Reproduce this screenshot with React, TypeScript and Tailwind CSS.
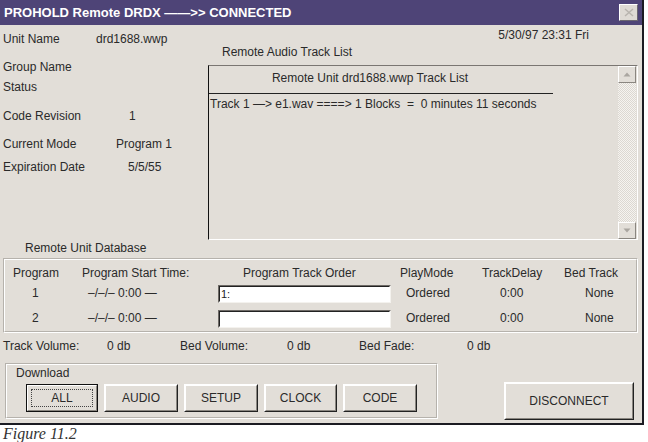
import React from 'react';

// raised 3d button in the old dialog style
function Btn({ label, w, h = 28, isDefault = false }: { label: string; w: number; h?: number; isDefault?: boolean }) {
  return (
    <div
      className={`flex items-center justify-center bg-[#e2ded8] text-[12px] text-[#2a2a2a] border ${
        isDefault ? 'border-[#111]' : 'border-t-white border-l-white border-r-[#222] border-b-[#222]'
      }`}
      style={{ width: w, height: h }}
    >
      <div className="w-full h-full flex items-center justify-center border border-t-white border-l-white border-r-[#8a8680] border-b-[#8a8680]">
        {isDefault ? (
          <div className="w-[calc(100%-6px)] h-[calc(100%-6px)] flex items-center justify-center border border-dotted border-[#444]">
            {label}
          </div>
        ) : (
          label
        )}
      </div>
    </div>
  );
}

// sunken edit box
function Field({ value }: { value: string }) {
  return (
    <div className="w-[173px] h-[18px] bg-white border border-t-[#6e6a66] border-l-[#6e6a66] border-r-[#f4f2ee] border-b-[#f4f2ee]">
      <div className="h-full border border-t-[#222] border-l-[#222] border-r-transparent border-b-transparent px-[1px] text-[11px] leading-[14px] text-[#222]">
        {value}
      </div>
    </div>
  );
}

const info = [
  { label: 'Unit Name', value: 'drd1688.wwp', valueX: 93, h: 28 },
  { label: 'Group Name', value: '', valueX: 0, h: 20 },
  { label: 'Status', value: '', valueX: 0, h: 29 },
  { label: 'Code Revision', value: '1', valueX: 126, h: 28 },
  { label: 'Current Mode', value: 'Program 1', valueX: 113, h: 23 },
  { label: 'Expiration Date', value: '5/5/55', valueX: 125, h: 20 },
];

const programs = [
  { n: '1', order: '1:' },
  { n: '2', order: '' },
];

export default function App() {
  return (
    <div className="w-[648px] h-[442px] bg-white overflow-hidden text-[#2a2a2a] font-['Liberation_Sans',Arial,sans-serif]">
      {/* dialog window */}
      <div className="w-[644px] h-[425px] flex flex-col border-r-2 border-b-2 border-[#1b1b22] bg-[#e2ded8]">
        {/* title bar */}
        <div className="h-[25px] shrink-0 bg-[#4e4477] flex items-center justify-between pl-[4px] pr-[4px]">
          <span className="text-white text-[13px] font-bold">PROHOLD Remote DRDX ——&gt;&gt; CONNECTED</span>
          <div className="w-[19px] h-[17px] bg-[#dedad4] border border-t-white border-l-white border-r-[#6a6670] border-b-[#6a6670] flex items-center justify-center">
            <svg width="10" height="9" viewBox="0 0 10 9">
              <path d="M1 1 L9 8 M9 1 L1 8" stroke="#b8b4ae" strokeWidth="1.5" />
            </svg>
          </div>
        </div>

        {/* body */}
        <div className="flex-1 flex flex-col px-[3px] text-[12px] leading-[15px]">
          <div className="flex">
            {/* unit info */}
            <div className="w-[205px] pt-[7px]">
              {info.map((row) => (
                <div key={row.label} className="relative" style={{ height: row.h }}>
                  <span>{row.label}</span>
                  {row.value && (
                    <span className="absolute top-0" style={{ left: row.valueX }}>
                      {row.value}
                    </span>
                  )}
                </div>
              ))}
            </div>

            {/* track list */}
            <div className="flex-1 flex flex-col pt-[4px]">
              <div className="flex justify-end pr-[50px] h-[13px] leading-[13px]">5/30/97 23:31 Fri</div>
              <div className="pl-[14px] mt-[3px] h-[20px]">Remote Audio Track List</div>
              <div className="w-[430px] h-[175px] flex border border-t-[#7a7672] border-l-[#111] border-r-white border-b-white">
                <div className="flex-1 flex flex-col">
                  <div className="w-[344px] h-[28px] border-b border-[#222] flex items-center justify-center pb-[3px] pr-[22px]">
                    Remote Unit drd1688.wwp Track List
                  </div>
                  <div className="pl-[1px] pt-[3px]">Track 1 —&gt; e1.wav ====&gt; 1 Blocks&nbsp; =&nbsp; 0 minutes 11 seconds</div>
                </div>
                {/* scrollbar */}
                <div className="w-[18px] flex flex-col bg-[repeating-conic-gradient(#f6f4f0_0_25%,#dcd8d2_0_50%)] bg-[length:2px_2px] mr-[1px]">
                  <div className="h-[17px] bg-[#e2ded8] border border-t-white border-l-white border-r-[#8a8680] border-b-[#8a8680] flex items-center justify-center">
                    <svg width="8" height="5" viewBox="0 0 8 5">
                      <path d="M4 0.5 L7.5 4.5 L0.5 4.5 Z" fill="#aaa6a0" />
                    </svg>
                  </div>
                  <div className="flex-1" />
                  <div className="h-[17px] bg-[#e2ded8] border border-t-white border-l-white border-r-[#8a8680] border-b-[#8a8680] flex items-center justify-center">
                    <svg width="8" height="5" viewBox="0 0 8 5">
                      <path d="M0.5 0.5 L7.5 0.5 L4 4.5 Z" fill="#aaa6a0" />
                    </svg>
                  </div>
                </div>
              </div>
            </div>
          </div>

          {/* database */}
          <div className="pl-[22px] mt-[1px] h-[17px]">Remote Unit Database</div>
          <div className="w-[635px] h-[75px] border border-t-[#b6b2ac] border-l-[#b6b2ac] border-r-white border-b-white">
            <div className="h-full border border-t-white border-l-white border-r-[#b6b2ac] border-b-[#b6b2ac] pt-[5px]">
              <div className="grid grid-cols-[72px_140px_180px_84px_78px_1fr] items-center h-[16px]">
                <span className="pl-[8px]">Program</span>
                <span className="pl-[5px]">Program Start Time:</span>
                <span className="pl-[26px]">Program Track Order</span>
                <span className="pl-[3px]">PlayMode</span>
                <span className="pl-[1px]">TrackDelay</span>
                <span className="pl-[5px]">Bed Track</span>
              </div>
              {programs.map((p) => (
                <div key={p.n} className="grid grid-cols-[72px_140px_180px_84px_78px_1fr] items-center h-[25px]">
                  <span className="pl-[27px]">{p.n}</span>
                  <span className="pl-[11px]">–/–/– 0:00 —</span>
                  <span className="pl-[1px]">
                    <Field value={p.order} />
                  </span>
                  <span className="pl-[9px]">Ordered</span>
                  <span className="pl-[19px]">0:00</span>
                  <span className="pl-[26px]">None</span>
                </div>
              ))}
            </div>
          </div>

          {/* volume levels */}
          <div className="flex h-[27px] items-center">
            <span className="w-[104px]">Track Volume:</span>
            <span className="w-[73px]">0 db</span>
            <span className="w-[107px]">Bed Volume:</span>
            <span className="w-[72px]">0 db</span>
            <span className="w-[108px]">Bed Fade:</span>
            <span>0 db</span>
          </div>

          {/* download buttons */}
          <div className="flex items-start mt-[3px]">
            <div className="ml-[2px] w-[433px] h-[56px] border border-t-[#b6b2ac] border-l-[#b6b2ac] border-r-white border-b-white">
              <div className="h-full border border-t-white border-l-white border-r-[#b6b2ac] border-b-[#b6b2ac] pl-[19px]">
                <div className="ml-[-10px] h-[19px] pt-[1px]">Download</div>
                <div className="flex gap-[6px]">
                  <Btn label="ALL" w={72} isDefault />
                  <Btn label="AUDIO" w={74} />
                  <Btn label="SETUP" w={74} />
                  <Btn label="CLOCK" w={73} />
                  <Btn label="CODE" w={74} />
                </div>
              </div>
            </div>
            <div className="ml-[66px] mt-[19px]">
              <Btn label="DISCONNECT" w={130} h={38} />
            </div>
          </div>
        </div>
      </div>

      {/* caption */}
      <div className="pl-[3px] font-['Liberation_Serif',serif] italic text-[16px] leading-[17px] text-[#333]">Figure 11.2</div>
    </div>
  );
}
